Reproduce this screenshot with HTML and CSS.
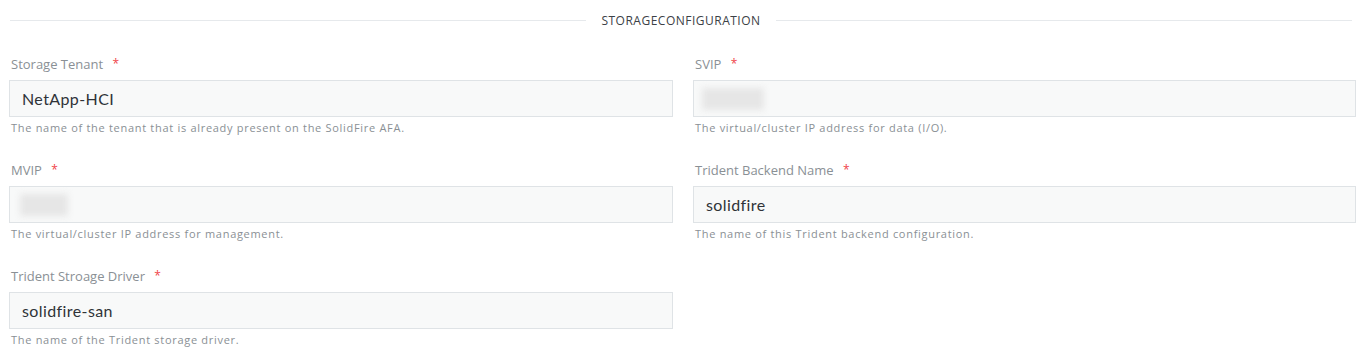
FILE: index.html
```html
<!DOCTYPE html>
<html lang="en">
<head>
    <meta charset="UTF-8">
    <meta name="viewport" content="width=device-width, initial-scale=1.0">
    <title>Storage Configuration</title>
    <link rel="stylesheet" href="styles.css">
</head>
<body>
    <main class="config">
        <div class="divider"><span>STORAGECONFIGURATION</span></div>

        <div class="fields">
            <div class="field">
                <label>Storage Tenant <b>*</b></label>
                <div class="input">NetApp-HCI</div>
                <p class="help">The name of the tenant that is already present on the SolidFire AFA.</p>
            </div>
            <div class="field">
                <label>SVIP <b>*</b></label>
                <div class="input"><span class="masked wide"></span></div>
                <p class="help">The virtual/cluster IP address for data (I/O).</p>
            </div>
            <div class="field">
                <label>MVIP <b>*</b></label>
                <div class="input"><span class="masked"></span></div>
                <p class="help">The virtual/cluster IP address for management.</p>
            </div>
            <div class="field">
                <label>Trident Backend Name <b>*</b></label>
                <div class="input">solidfire</div>
                <p class="help">The name of this Trident backend configuration.</p>
            </div>
            <div class="field">
                <label>Trident Stroage Driver <b>*</b></label>
                <div class="input">solidfire-san</div>
                <p class="help">The name of the Trident storage driver.</p>
            </div>
        </div>
    </main>
</body>
</html>
```

FILE: styles.css
```css
* { margin: 0; padding: 0; box-sizing: border-box }
body { background: #fff; font-family: "Open Sans", "Noto Sans", sans-serif; color: #333 }

.config { padding: 0 5px 0 9px }

/* section heading with rules either side */
.divider { display: flex; align-items: center; gap: 15px; height: 40px; margin: 0 4px 15px 1px;
    font-size: 12px; color: #3c4146; letter-spacing: 0.5px }
.divider::before, .divider::after { content: ""; flex: 1; height: 1px; background: #e6e9ec }

.fields { display: grid; grid-template-columns: 664px 663px; column-gap: 20px; row-gap: 25px }

.field label { display: block; font-size: 13px; line-height: 18px; color: #8a9095; padding-left: 2px; margin-bottom: 7px }
.field label b { color: #f0444a; font-weight: 400; font-size: 12px; margin-left: 6px; vertical-align: 1px }

.input { height: 37px; background: #f8f9f9; border: 1px solid #dfe3e6; padding: 0 12px;
    display: flex; align-items: center; font-family: Lato, "Open Sans", sans-serif;
    font-size: 16px; letter-spacing: 0.4px; color: #2f3338 }

.masked { display: inline-block; width: 48px; height: 22px; background: #e6e6e6; filter: blur(3px); margin-left: -2px }
.masked.wide { width: 62px; margin-left: -4px }

.help { font-size: 11px; line-height: 16px; margin-top: 3px; color: #8a9095; padding-left: 2px; letter-spacing: 0.7px }
```
